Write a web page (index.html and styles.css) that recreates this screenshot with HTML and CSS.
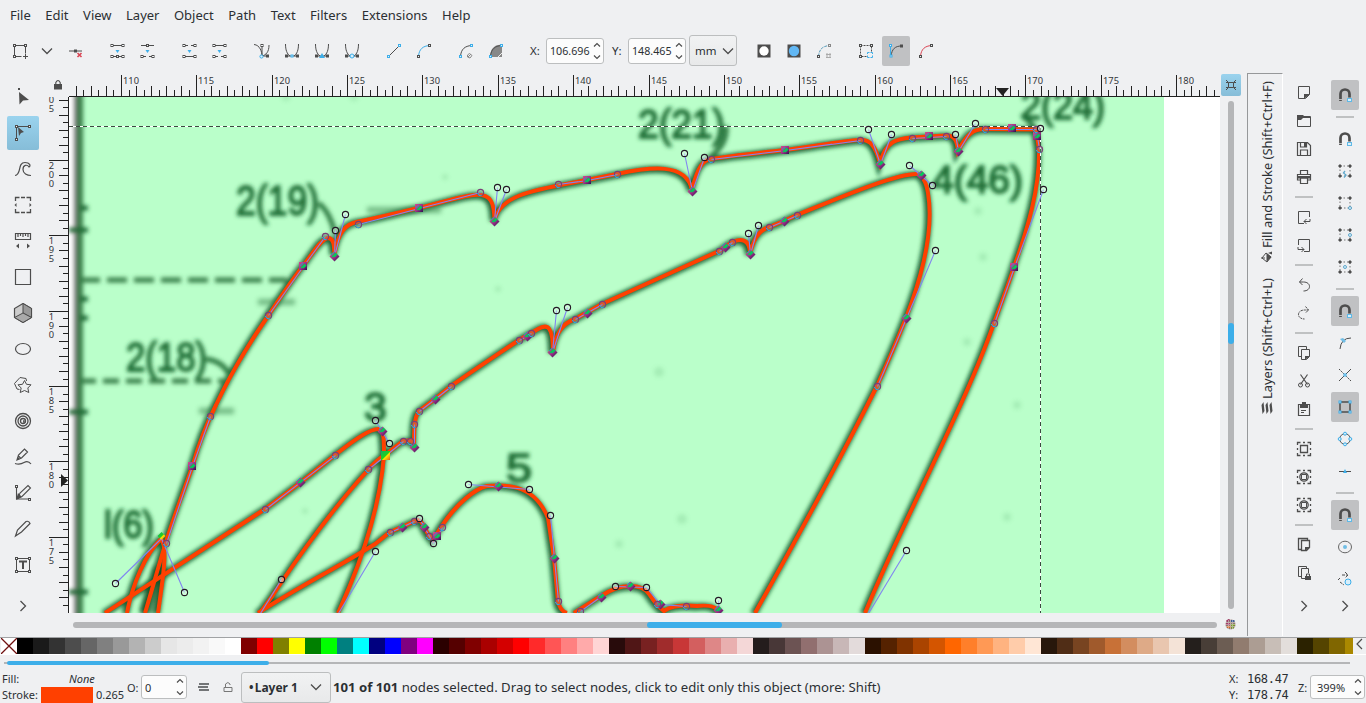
FILE: index.html
```html
<!DOCTYPE html>
<html lang="en">
<head>
<meta charset="utf-8">
<title>Vector editor</title>
<link rel="stylesheet" href="styles.css">
</head>
<body>
<div class="app">
  <nav class="menubar"><span>File</span><span>Edit</span><span>View</span><span>Layer</span><span>Object</span><span>Path</span><span>Text</span><span>Filters</span><span>Extensions</span><span>Help</span></nav>

  <header class="toolbar">
    <i class="cell" data-icon="addnode"></i><i class="cell slim" data-icon="down"></i><i class="cell" data-icon="delnode"></i>
    <i class="cell gap" data-icon="join"></i><i class="cell" data-icon="break"></i>
    <i class="cell gap" data-icon="joinseg"></i><i class="cell" data-icon="delseg"></i>
    <i class="cell gap" data-icon="cusp"></i><i class="cell" data-icon="smooth"></i><i class="cell" data-icon="symm"></i><i class="cell" data-icon="auto"></i>
    <i class="cell gap" data-icon="line"></i><i class="cell" data-icon="curve"></i>
    <i class="cell gap" data-icon="objpath"></i><i class="cell" data-icon="strokepath"></i>
    <label class="lab lab-x">X:</label><span class="spin"><b>106.696</b><i data-icon="spin"></i></span>
    <label class="lab lab-y">Y:</label><span class="spin"><b>148.465</b><i data-icon="spin"></i></span>
    <span class="unit">mm<i data-icon="down"></i></span>
    <i class="cell unitgap" data-icon="clip"></i><i class="cell" data-icon="mask"></i><i class="cell" data-icon="lpe"></i>
    <i class="cell gap" data-icon="transf"></i><i class="cell on" data-icon="handles"></i><i class="cell" data-icon="outline"></i>
  </header>

  <main class="work">
    <aside class="toolbox">
      <i data-icon="arrow"></i><i class="on" data-icon="node"></i><i data-icon="tweak"></i><i data-icon="zoombox"></i><i data-icon="measure"></i><i data-icon="rect"></i><i data-icon="cube"></i><i data-icon="ellipse"></i><i data-icon="star"></i><i data-icon="spiral"></i><i data-icon="pencil"></i><i data-icon="pen"></i><i data-icon="brush"></i><i data-icon="text"></i><i class="more" data-icon="right"></i>
    </aside>

    <section class="view">
      <div class="corner" data-icon="lock"></div>
      <svg class="hruler" id="hruler" viewBox="69 73 1151 24"></svg>
      <div class="zoomfit" data-icon="fit"></div>
      <svg class="vruler" id="vruler" viewBox="46 97 23 516"></svg>
      <svg class="canvas" viewBox="69 97 1151 516">
        <defs>
          <filter id="soft" x="-5%" y="-5%" width="110%" height="110%"><feGaussianBlur stdDeviation="2"/></filter>
          <filter id="softer" x="-20%" y="-50%" width="140%" height="200%"><feGaussianBlur stdDeviation="2.8"/></filter>
          <linearGradient id="nodefill" x1="0" y1="0" x2="1" y2="1"><stop offset="0" stop-color="#d05090"/><stop offset=".5" stop-color="#a03088"/><stop offset="1" stop-color="#2c1250"/></linearGradient>
          <linearGradient id="nodehot" x1="0" y1="0" x2="1" y2="1"><stop offset="0" stop-color="#10b060"/><stop offset=".5" stop-color="#20d020"/><stop offset=".6" stop-color="#ffe000"/><stop offset="1" stop-color="#e06020"/></linearGradient>
          <g id="curves">
            <path d="M145 613C152 590 159 564 166 542C174 516 184 491 192.500 466C200 440 208 421 216 405C231 373 250 342 268 316C280 298 291 281 303 266C313 253 321 239 328 238C334 238 334 246 334.500 254C338 233 345 224 358 221.500C379 218 399 212 419 208C440 203 461 196 474 195C492 193 494 204 494.500 220C501 194 535 190 587 180C597 178 607 176 617 174C650 167 686 162 692 190C698 165 704 160 711 159C735 155 760 153 785 150C810 147 835 142 858 140C871 138 876 148 880 163C886 140 898 139 912 137.500C918 137 923 137 929 136.500L946 135.500C955 135 957 141 958 151C967 134 973 129 985 129L1036 129.500L1039 149C1040 187 1028 228 1014 267C1008 286 1001 304 994 323C966 404 902 523 865 613"/>
            <path d="M755 613C796 540 842 456 877 386C887 364 897 341 906 318C926 266 933 223 928 193C926 180 921 175 918 174C896 173 834 200 797 215L784 221L769 227C757 231 753 242 750 254C750 244 746 240 740 240C732 240 728 246 719 251L602 304L575 319C560 324 555 337 553 352C553 327 548 323 538 329L519 340C495 356 474 370 451 386L435 399L419 411C414 417 414 431 414 447C414 440 411 440 403 441L385 455C378 459 374 463 368 470C336 505 299 555 273 595L260 613"/>
            <path d="M105 613L265 509L300 483L335 455C355 439 371 428 379 429C384 431 384 440 384 455C380 509 361 563 338 613"/>
            <path d="M127 613C132 586 145 554 161 539C168 547 163 578 158 613"/>
            <path d="M258 613C297 588 340 566 375 544L390 532L402 527L415 521C422 518 423 526 428 534L433 540L441 527C457 503 475 489 487 486C510 484 535 486 548 518L554 558L558 601Q560 611 567 613"/>
            <path d="M574 613L601 596Q616 586 630 586Q644 586 649 594Q657 606 664 611Q674 604 697 606Q717 604 719 613"/>
          </g>
        </defs>
        <rect x="69" y="97" width="1151" height="516" fill="#fff"/>
        <rect x="78" y="97" width="1086" height="516" fill="#baffca"/>
        <g filter="url(#soft)">
          <path d="M76 90V620" stroke="#777" stroke-width="4"/>
          <path d="M80 90V620" stroke="#377f49" stroke-width="6"/>
          <g fill="none" stroke="#0f5226" stroke-width="7" opacity=".9"><use href="#curves" x="-1.500" y="1"/></g>
          <path d="M80 208h8M69 230h19M80 299h8M80 318h8M69 412h19M69 592h19" stroke="#1e6934" stroke-width="5"/>
          <path d="M80 280H287" stroke="#387e49" stroke-width="5" stroke-dasharray="20 7"/>
          <path d="M80 381H226" stroke="#387e49" stroke-width="5" stroke-dasharray="16 7"/>
          <path d="M319 203Q331 214 335 234M206 359Q226 362 230 378M726 126Q728 144 709 158M1022 114L1035 128" fill="none" stroke="#2c783f" stroke-width="5"/>
          <g class="scan-text">
            <text x="236" y="215" font-size="42" textLength="83" lengthAdjust="spacingAndGlyphs">2(19)</text>
            <text x="126" y="371" font-size="41" textLength="81" lengthAdjust="spacingAndGlyphs">2(18)</text>
            <text x="638" y="138" font-size="41" textLength="87" lengthAdjust="spacingAndGlyphs">2(21)</text>
            <text x="1021" y="119" font-size="38" textLength="84" lengthAdjust="spacingAndGlyphs">2(24)</text>
            <text x="932" y="193" font-size="39" textLength="91" lengthAdjust="spacingAndGlyphs">4(46)</text>
            <text x="104" y="538" font-size="39" textLength="50" lengthAdjust="spacingAndGlyphs">l(6)</text>
            <text x="364" y="421" font-size="41">3</text>
            <text x="506" y="482" font-size="41" textLength="26" lengthAdjust="spacingAndGlyphs">5</text>
          </g>
        </g>
        <g filter="url(#softer)" opacity=".55">
          <path d="M258 302h37M199 411h35M367 210h74" stroke="#37814b" stroke-width="6"/>
          <path d="M160 568L146 613" stroke="#07441b" stroke-width="14"/>
        </g>
        <g fill="#78c58a" opacity=".3" filter="url(#soft)"><circle cx="354" cy="97" r="4"/><circle cx="286" cy="97" r="4"/><circle cx="445" cy="177" r="3"/><circle cx="498" cy="289" r="3"/><circle cx="659" cy="372" r="5"/><circle cx="682" cy="519" r="5"/><circle cx="619" cy="544" r="4"/><circle cx="978" cy="211" r="4"/><circle cx="983" cy="257" r="4"/><circle cx="967" cy="342" r="4"/><circle cx="1017" cy="405" r="4"/><circle cx="1007" cy="517" r="4"/><circle cx="305" cy="511" r="3"/></g>
        <use href="#curves" fill="none" stroke="#ff4000" stroke-width="4"/>
        <g fill="none" shape-rendering="crispEdges"><path d="M69 126.500H1040.500V613" stroke="#fff"/><path d="M69 126.500H1040.500V613" stroke="#3c4a40" stroke-dasharray="4 3"/></g>
        <g id="nodes"></g>
      </svg>
      <div class="vscroll"><span></span></div>
      <div class="hscroll"><span></span></div>
      <div class="cms" data-icon="cms"></div>
    </section>

    <aside class="dock"><span class="tab tab-layers"><i data-icon="layers"></i>Layers (Shift+Ctrl+L)</span><span class="tab"><i data-icon="bucket"></i>Fill and Stroke (Shift+Ctrl+F)</span></aside>

    <aside class="commands">
      <i data-icon="new"></i><i data-icon="open"></i><i data-icon="save"></i><i data-icon="print"></i><hr>
      <i data-icon="import"></i><i data-icon="export"></i><hr><i data-icon="undo"></i><i data-icon="redo"></i><hr>
      <i data-icon="copy"></i><i data-icon="cut"></i><i data-icon="paste"></i><hr>
      <i data-icon="zsel"></i><i data-icon="zdraw"></i><i data-icon="zdraw"></i><hr>
      <i data-icon="dup"></i><i data-icon="clone"></i><i class="more" data-icon="right"></i>
    </aside>
    <aside class="snap">
      <i class="on" data-icon="magnet"></i><hr><i data-icon="magnet"></i><i data-icon="sn1"></i><i data-icon="sn2"></i><i data-icon="sn3"></i><i data-icon="sn4"></i><hr>
      <i class="on" data-icon="magnet"></i><i data-icon="snpath"></i><i data-icon="sncross"></i><i class="on" data-icon="sncusp"></i><i data-icon="snsmooth"></i><i data-icon="snmid"></i><hr>
      <i class="on" data-icon="magnet"></i><i data-icon="sncenter"></i><i data-icon="snrot"></i><i class="more" data-icon="right"></i>
    </aside>
  </main>

  <div class="palette"><div class="swatches" id="swatches"></div><i data-icon="left"></i></div>
  <div class="palscroll"><span></span></div>

  <footer class="status">
    <div class="style"><span>Fill:</span><em>None</em><span>Stroke:</span><b class="strokecolor"></b><span class="sw">0.265</span></div>
    <span class="opl">O:</span><span class="spin opacity"><b>0</b><i data-icon="spin"></i></span>
    <i class="vis" data-icon="lines"></i><i class="lk" data-icon="unlock"></i>
    <span class="layer"><b>•&hairsp;Layer 1</b><i data-icon="down"></i></span>
    <p class="message"><b>101 of 101</b> nodes selected. Drag to select nodes, click to edit only this object (more: Shift)</p>
    <div class="coords"><span>X:</span><code>168.47</code><span>Y:</span><code>178.74</code></div>
    <span class="zl">Z:</span><span class="spin zoom"><b>399%</b><i data-icon="spin"></i></span>
  </footer>
</div>
<script src="script.js"></script>
</body>
</html>
```
FILE: styles.css
```css
* { box-sizing: border-box; }
body { margin: 0; background: #eff0f2; color: #2b2f33; font: 13px "Noto Sans", sans-serif; overflow: hidden; }
i { font-style: normal; }
svg { display: block; }
i[data-icon] { display: flex; align-items: center; justify-content: center; }
.app { width: 1366px; height: 703px; display: flex; flex-direction: column; }

.menubar { height: 30px; padding-left: 10px; display: flex; gap: 14.5px; align-items: center; }

.toolbar { height: 43px; display: flex; align-items: center; padding: 0 0 2px 5px; font-size: 11.5px; }
.cell { width: 30px; height: 30px; flex: none; }
.cell.slim { width: 24px; margin-right: 2px; }
.cell.gap { margin-left: 12px; }
.cell.on { width: 28px; margin: 0 1px; background: #c0c1c3; border-radius: 2px; }
.cell.unitgap { margin-left: 12px; }
.lab-x { width: 16px; margin-left: 19px; }
.lab-y { width: 16px; margin-left: 8px; }
.spin { display: flex; align-items: center; justify-content: space-between; width: 58px; height: 26px; border: 1px solid #bcbebf; border-radius: 3px; background: #fcfcfc; padding-left: 3px; font-size: 10.7px; }
.spin b { font-weight: 400; width: 41px; white-space: nowrap; }
.spin i { width: 11px; flex: none; }
.unit { display: flex; align-items: center; width: 48px; height: 31px; margin-left: 3px; padding-left: 5px; gap: 3px; border: 1px solid #bcbebf; border-radius: 3px; background: linear-gradient(#f1f2f3, #e8e9ea); }

.work { height: 564px; display: flex; }
.toolbox { width: 46px; padding-top: 6px; display: flex; flex-direction: column; align-items: center; }
.toolbox i { width: 32px; height: 34px; margin: 1px 0; flex: none; }
.toolbox .on, .zoomfit { background: linear-gradient(#9ad3ee, #86bdd8); border-radius: 2px; }
.toolbox .more { margin-top: 6px; }

.view { width: 1201px; display: grid; grid-template-columns: 23px 1151px 27px; grid-template-rows: 24px 516px 24px; }
.corner { display: flex; align-items: center; justify-content: center; }
.zoomfit { width: 20px; height: 22px; margin: 1px 0 0 1px; display: flex; align-items: center; justify-content: center; }
.hruler, .vruler, .canvas { width: 100%; height: 100%; }
.hruler text, .vruler text { font: 9.3px "Noto Sans", sans-serif; fill: #33373b; }
.canvas { overflow: hidden; }
.scan-text { font-family: "Liberation Sans", sans-serif; fill: #1e6c34; stroke: #1e6c34; stroke-width: 1.8; }
.vscroll { width: 6px; height: 508px; margin: 4px 0 0 8px; padding-top: 222px; border-radius: 3px; background: #b5b6b8; }
.vscroll span { display: block; height: 21px; border-radius: 3px; background: #3daee9; }
.hscroll { grid-column: 1 / 3; width: 1144px; height: 6px; margin: 9px 0 0 27px; padding-left: 574px; border-radius: 3px; background: #b5b6b8; }
.hscroll span { display: block; width: 135px; height: 6px; border-radius: 3px; background: #3daee9; }
.cms { padding: 6px 0 0 5px; }

.dock { width: 36px; height: 563px; writing-mode: vertical-rl; transform: rotate(180deg); border-left: 1px solid #fff; border-right: 1px solid #96989a; border-bottom: 1px solid #96989a; display: flex; justify-content: flex-end; align-items: center; padding: 0 4px 7px 0; gap: 15px; font-size: 12.9px; }
.tab { display: flex; align-items: center; gap: 3px; white-space: nowrap; }

.commands { width: 42px; }
.snap { width: 40px; }
.commands, .snap { padding-top: 6px; display: flex; flex-direction: column; align-items: center; }
.commands i { width: 28px; height: 28px; }
.snap i { width: 28px; height: 30px; margin: 1px 0; }
.snap .on { background: #c0c1c3; border-radius: 2px; }
.commands hr, .snap hr { width: 18px; height: 2px; margin: 5px 0; border: 0; background: #bfc1c2; flex: none; }
.commands .more { margin-top: 5px; }
.snap .more { margin-top: -4px; }

.palette { height: 18px; border-top: 1px solid #a0a2a4; border-bottom: 1px solid #fff; display: flex; }
.swatches { width: 1353px; padding-left: 1px; display: flex; overflow: hidden; }
.swatches span { width: 16px; height: 16px; flex: none; }
.palette i { width: 13px; height: 12px; }
.palscroll { width: 1346px; height: 2px; flex: none; margin: 7px 0 1px 4px; padding-left: 3px; background: #b5b6b8; }
.palscroll span { display: block; width: 262px; height: 4px; border-radius: 2px; background: #3daee9; transform: translateY(-1px); }

.status { height: 38px; padding: 6px 0 0 2px; display: flex; align-items: center; }
.style { width: 123px; height: 32px; display: grid; grid-template: 16px 16px / 39px 52px 32px; font-size: 11px; line-height: 16px; }
.style em { grid-column: 2 / 4; padding-left: 28px; }
.strokecolor { background: #ff4000; }
.style .sw { padding-left: 3px; }
.opl { width: 16px; padding-left: 2px; font-size: 11px; }
.opacity { width: 46px; height: 24px; font-size: 11px; }
.opacity b, .zoom b { width: 30px; }
.vis { width: 14px; margin-left: 10px; }
.lk { width: 14px; margin-left: 10px; }
.layer { width: 90px; height: 31px; margin-left: 6px; padding: 0 6px 0 7px; display: flex; align-items: center; justify-content: space-between; border: 1px solid #bcbebf; border-radius: 3px; background: linear-gradient(#f1f2f3, #e8e9ea); font-size: 12px; }
.message { margin: 0 0 0 2px; width: 896px; font-size: 13.16px; white-space: nowrap; }
.coords { width: 69px; display: grid; grid-template: 16px 16px / 18px 50px; font-size: 11px; line-height: 16px; }
.coords code { font: 12px/16px "DejaVu Sans Mono", monospace; letter-spacing: -.3px; }
.zl { width: 12px; font-size: 11px; }
.zoom { width: 55px; height: 24px; font-size: 11px; padding-left: 6px; }
```
FILE: script.js
```js
const D = '#4d4d4d', B = '#3daee9';
const p = (d, c = D, w = 1, f = 'none') => `<path d="${d}" fill="${f}" stroke="${c}" stroke-width="${w}"/>`;
const dot = (x, y, c = D) => `<rect x="${x - 1}" y="${y - 1}" width="2" height="2" fill="#eff0f2" stroke="${c}"/>`;
const ring = (x, y, r = 2, c = B) => `<circle cx="${x}" cy="${y}" r="${r}" fill="#d8effb" stroke="${c}"/>`;
const fill = (d, c = D) => `<path d="${d}" fill="${c}"/>`;
const seg = (y, gap) => (gap ? p(`M3 ${y}h4M10 ${y}h4`) : p(`M3 ${y}h11`)) + dot(3, y) + dot(14, y);
const cup = p('M2.500 2C2.500 8 4 12 7 14M15.500 2C15.500 8 14 12 11 14M3 14h12') + dot(3.500, 14) + dot(14.500, 14);
const page = p('M3.500 2.500h11v8l-4 4h-7z');
const corners = p('M2.500 5v-2.500h3M12.500 2.500h3v2.500M15.500 13v2.500h-3M5.500 15.500h-3v-2.500M8 2.500h2M8 15.500h2M2.500 8v2M15.500 8v2', D, 1.3);
const snapBox = p('M4 4h10v10h-10z', '#777').replace('/>', ' stroke-dasharray="1.500 2"/>') + [[4, 4], [14, 4], [4, 14], [14, 14]].map(([x, y]) => fill(`M${x - 2} ${y}l2-2 2 2-2 2z`)).join('');

const icons = {
  down: [16, 16, p('M3 5.500l5 5 5-5', D, 1.3)],
  right: [16, 16, p('M5.500 3l5 5-5 5', D, 1.3)],
  left: [13, 12, p('M9 1l-5 5 5 5', D, 1.2)],
  spin: [11, 24, p('M2 7.500l3-3 3 3M2 16.500l3 3 3-3', D, 1.2)],
  addnode: [18, 18, p('M3.500 3.500h11v8M3.500 3.500v11h7M12 14.500h5M14.500 12v5') + dot(3.500, 3.500) + dot(14.500, 3.500) + dot(3.500, 14.500)],
  delnode: [18, 18, p('M2 9h13') + dot(8.500, 9) + p('M10.500 11l4 4M14.500 11l-4 4', '#da4453', 1.6)],
  join: [18, 18, seg(3.5) + seg(14.5) + dot(8.500, 14.5) + fill('M6.500 8h4l-2 3z', B)],
  break: [18, 18, p('M2 3.500h13') + dot(8.500, 3.5) + seg(14.5, 1) + fill('M6.500 8h4l-2 3z', B)],
  joinseg: [18, 18, seg(3.5, 1) + seg(14.5) + fill('M6.500 8h4l-2 3z', B)],
  delseg: [18, 18, seg(3.5) + seg(14.5, 1) + fill('M6.500 8h4l-2 3z', B)],
  cusp: [18, 18, p('M1 2.500C7 3 9 10 9 14C13 13 16 10 16 3M9 14V4M9 14h5') + dot(9, 3.5) + dot(14.5, 14) + ring(8.5, 14.5, 1.6)],
  smooth: [18, 18, cup + dot(9, 14, B)],
  symm: [18, 18, cup + fill('M6 16l3-5 3 5z', B)],
  auto: [18, 18, cup + ring(9, 14)],
  line: [18, 18, p('M3.500 14.500l11-11') + dot(3.5, 14.5, B) + dot(14.5, 3.5, B)],
  curve: [18, 18, p('M3.500 14.500C4 7 8 4 14.500 3.500', B) + dot(3.5, 14.5) + dot(14.5, 3.5)],
  objpath: [18, 18, p('M3.500 14.500C4 7 8 4 14.500 3.500') + dot(3.5, 14.5, B) + dot(14.5, 3.5, B) + p('M10.500 13l2-1.500 2.500 2-2 2.500-2.500-1zM11 15l3-3', '#888')],
  strokepath: [18, 18, fill('M3 15C3 7 8 2 15 3v12z', '#888') + p('M3.500 14.500C4 7 8 4 14.500 3.500') + dot(3.5, 14.5, B) + dot(14.5, 3.5, B) + p('M11 15l4-4', '#eee')],
  clip: [16, 16, fill('M1.500 1.500h13v13h-13z') + '<circle cx="8" cy="8" r="4.700" fill="#fff"/>'],
  mask: [16, 16, fill('M1.500 1.500h13v13h-13z') + '<circle cx="8" cy="8" r="5.200" fill="#62b8f5"/>'],
  lpe: [18, 18, p('M3.500 14.500C4 7 8 4 14.500 3.500', '#5a9dbb').replace('/>', ' stroke-dasharray="3 1"/>') + dot(3.5, 14.5) + dot(14.5, 3.5, '#888') + p('M11 12.500h5M11 15.500h5M12 11v5M15 11v5', '#aaa')],
  transf: [18, 18, p('M3.500 3.500h11v6M3.500 3.500v11h6').replace('/>', ' stroke-dasharray="2 1"/>') + dot(3.5, 3.5) + dot(14.5, 3.5) + dot(3.5, 14.5) + p('M10.500 12v-1.500h2M15.500 12v-1.500h-2M10.500 13.500v2h2M15.500 13.500v2h-2', B)],
  handles: [18, 18, p('M4 14C5 7 8 4 14.500 4') + p('M3.500 4v10', B) + dot(3.5, 3.5, B) + dot(4, 14, B) + dot(14.5, 4)],
  outline: [18, 18, p('M3.500 14.500C4 7 8 4 14.500 3.500', '#da4453') + dot(3.5, 14.5) + dot(14.5, 3.5)],
  arrow: [20, 20, fill('M6 5l10 8-6 .500-3.500 4zM5 1h2v2H5z')],
  node: [20, 20, p('M3.500 16V3.500H17') + dot(3.5, 3.5) + dot(3.5, 16.5) + dot(16.5, 3.5) + fill('M5 4l6 5-3 1-2 3z')],
  tweak: [20, 20, p('M2 16.500C9 16 4 3.500 12 3.500c5 0 6 3.500 4 4.500c-2-3-6-2-6 2.500c0 4 4 6 8 6', D, 1.2)],
  zoombox: [20, 20, p('M2.500 6v-3.500h4M13.500 2.500h4v3.500M17.500 14v3.500h-4M6.500 17.500h-4v-3.500M8 2.500h4M8 17.500h4', D, 1.3) + fill('M1.500 10l2-2v4zM18.500 10l-2-2v4z')],
  measure: [20, 20, p('M2.500 2.500h15v6h-15zM5 3v3M7.500 3v2M10 3v3M12.500 3v2M15 3v3', D, 1.2) + fill('M3 15l3-2.500v5zM17 15l-3-2.500v5z')],
  rect: [20, 20, p('M2.500 2.500h15v15h-15z', D, 1.2)],
  cube: [20, 20, p('M10 .500l8.500 5v9l-8.500 5-8.500-5v-9z', D, 1.2, '#ccc') + p('M10 .500l8.500 5v9L10 10z', D, 1, '#999') + p('M1.500 14.500L10 10l8.500 4.500-8.500 5z', D, 1, '#aaa')],
  ellipse: [20, 20, '<ellipse cx="10" cy="10" rx="7.500" ry="5.500" fill="none" stroke="#4d4d4d" stroke-width="1.200"/>'],
  star: [20, 20, p('M6.500 14.500L4 14L1.500 8.500L7 2.500L13 3.500L13.500 6') + p('M11.500 5.500l2 3.800 4.500.500-3.200 3.200 1 4.500-4.300-2-4.300 2 1-4.500-3.200-3.200 4.500-.500z')],
  spiral: [20, 20, '<circle cx="10" cy="10" r="7.500"/><circle cx="10" cy="10" r="5"/><circle cx="10" cy="10" r="2.500"/><path d="M10 10h1v2"/>'.replace(/\/>/g, ' fill="none" stroke="#4d4d4d" stroke-width="1.300"/>')],
  pencil: [20, 20, p('M4 13l1.500-5 6-6 3 3-6 6zM5 8.500l3 3M2 16.500q5 1.500 9-1t7 1.500', D, 1.2) + fill('M4 13l1-3 2 2z')],
  pen: [20, 20, p('M3.500 3v13h14M5 15l2-5 8-7.500 2.500 2.500-8.500 8.500z', D, 1.1) + dot(3.5, 3.5) + dot(16.5, 16.5) + fill('M3 17l2-7 4 4z')],
  brush: [20, 20, p('M2.500 17l2-6 8.500-8.500q3-1 4 2L8.500 13z', D, 1.2)],
  text: [20, 20, p('M3.500 3.500h13v13h-13z') + dot(3.5, 3.5) + dot(16.5, 3.5) + dot(3.5, 16.5) + dot(16.5, 16.5) + p('M6 6.500h8M10 6.500v7.500', D, 2)],
  lock: [10, 12, fill('M1 5h8v5.500H1z') + p('M2.800 6V3.500Q5-.500 7.200 3.500V6', D, 1.1)],
  unlock: [12, 14, p('M2 7.500h8v4H2zM3.500 7V4Q6 1 8 4v1', '#777')],
  fit: [14, 14, p('M4.500 4.500h5v5h-5zM2 2l2.500 2.500M12 2L9.500 4.500M2 12l2.500-2.500M12 12L9.500 9.500M2 4.500h2M10 4.500h2M2 9.500h2M10 9.500h2')],
  cms: [11, 11, '<g><circle cx="5.500" cy="5.500" r="5" fill="#8f766f"/><path d="M1.500 2.500l3-2M1 5h4" stroke="#a13c67" stroke-width="2"/><path d="M6 2h3.500" stroke="#3e5c94" stroke-width="2"/><path d="M2 8h3.500" stroke="#d16628" stroke-width="2"/><path d="M6 8.500h3M6 6h4" stroke="#78942e" stroke-width="2"/><path d="M1 3.500h9M0 5.500h11M1 7.500h9M3.500 1v9M5.500 0v11M7.500 1v9" stroke="#fff" opacity=".4"/></g>'],
  layers: [12, 12, '<g transform="rotate(90 6 6)">' + fill('M0 1.500L9 .500l3 2-9 1zM0 5.500l9-1 3 2-9 1zM0 9.500l9-1 3 2-9 1z') + '</g>'],
  bucket: [13, 12, '<g transform="rotate(90 6 6)">' + p('M5 1L1 6l5 4 4-5zM5 4V0') + fill('M1 5.500h9l-4 5zM10 7l1.500 4h-3z') + '</g>'],
  new: [18, 18, page + fill('M9 15v-5h6z')],
  open: [18, 18, p('M2.500 4.500h13v10h-13z') + fill('M2 3h6l2 2h6v1H8L6 8H2z')],
  save: [18, 18, p('M2.500 2.500h10l3 3v10h-13zM5.500 3v4h6v-4M5.500 15v-5h7v5', D, 1.2) + fill('M9 3h2v4H9z')],
  print: [18, 18, p('M5.500 6V2.500h7V6M5.500 12h-3V6.500h13V12h-3M5.500 10h7v5.500h-7z', D, 1.2) + fill('M3 8h12v2.500H3z')],
  import: [18, 18, p('M9 15.500H3.500v-12h11V9M15 11v2.500H9M11.500 11L9 13.500l2.500 2.500')],
  export: [18, 18, p('M9 15.500h5.500v-12h-11V9M3 11v2.500h6M6.500 11L9 13.500l-2.500 2.500')],
  undo: [18, 18, p('M7.500 2.500L4.500 6l3 3M4.500 6h4c8 0 8 9 0 9')],
  redo: [18, 18, p('M10.500 2.500l3 3.500-3 3M13.500 6h-4c-8 0-8 9 0 9').replace('/>', ' stroke-dasharray="2 .7"/>')],
  copy: [18, 18, p('M6 12.500H3.500v-10h8V5M6.500 5.500h8v7l-3 3h-5z') + fill('M10 16v-4h5z')],
  cut: [18, 18, p('M5.500 2.500l7 10M12.500 2.500l-7 10', D, 1.2) + p('M3.500 13a2 2 0 1 0 4 0a2 2 0 1 0-4 0M10.500 13a2 2 0 1 0 4 0a2 2 0 1 0-4 0')],
  paste: [18, 18, p('M3.500 4.500h11v11h-11z', D, 1.2) + fill('M5 5h8v3H5zM7 2h4v4H7zM6 10h5v1H6zM6 12h3v1H6z')],
  zsel: [18, 18, corners + p('M5.500 5.500h7v7h-7z', D, 1.3)],
  zdraw: [18, 18, corners + '<circle cx="9" cy="9" r="4.200" fill="none" stroke="#4d4d4d" stroke-width="1.300"/>' + p('M6.500 6.500h5v5h-5z')],
  dup: [18, 18, p('M6 13.500H3.500v-11h9v2M6.500 4.500h8v7l-3 3h-5z', D, 1.3) + fill('M10 15v-4h5z')],
  clone: [18, 18, p('M6 12.500H3.500v-10h8v2M13.500 9V4.500h-7v10H10') + fill('M10 12h6v4h-6z') + p('M11.500 12v-2h3v2')],
  magnet: [18, 18, p('M4.500 15V8a4.500 4.500 0 0 1 9 0V11.500', D, 2.7) + p('M3 13.500h3', '#bbb') + '<rect x="11.500" y="12.500" width="4" height="3" fill="#d8effb" stroke="#60b9e6"/>'],
  sn1: [18, 18, snapBox + p('M9 9l-1.500 2L10 13l-2 2.500', '#60a8cc', 1.3)],
  sn2: [18, 18, snapBox + ring(14, 14, 1.5, '#60a8cc')],
  sn3: [18, 18, snapBox + ring(14, 9, 1.5, '#60a8cc')],
  sn4: [18, 18, snapBox + ring(9, 9, 1.5, '#60a8cc')],
  snpath: [18, 18, p('M4 15Q5 4 15 4') + fill('M4 5l3-1 3 3-2 2z', '#70bde5')],
  sncross: [18, 18, p('M3 15L15 3') + p('M3 3l12 12').replace('/>', ' stroke-dasharray="2 1"/>') + dot(9, 9, B)],
  sncusp: [18, 18, p('M4 4h10v10H4z', D, 1.5) + dot(4, 4, B) + dot(14, 4, B) + dot(4, 14, B) + dot(14, 14, B)],
  snsmooth: [18, 18, '<circle cx="9" cy="9" r="5.300" fill="none" stroke="#555"/>' + ring(9, 3.7, 1.5) + ring(9, 14.3, 1.5) + ring(3.7, 9, 1.5) + ring(14.3, 9, 1.5)],
  snmid: [18, 18, p('M3 9.500h12') + fill('M7 11L9 7l2 4z', B)],
  sncenter: [18, 18, '<ellipse cx="9" cy="9" rx="6.500" ry="5.800" fill="none" stroke="#666"/><circle cx="9" cy="9" r="2" fill="#70bde5"/>'],
  snrot: [18, 18, p('M6 5h6M9 2l3 3-3 3M4 8l-2 2M4 12l4 3').replace('/>', ' stroke-dasharray="3 1"/>') + ring(12, 12, 3)],
  lines: [14, 14, fill('M2 3h10v2H2zM1 6h10v2H1zM2 9h10v2H2z', '#737577')]
};
document.querySelectorAll('[data-icon]').forEach(el => {
  const [w, h, body] = icons[el.dataset.icon];
  el.innerHTML = `<svg width="${w}" height="${h}" viewBox="0 0 ${w} ${h}">${body}</svg>`;
});

/* Rulers: one unit is 15.07px, with half-unit ticks between. */
const STEP = 7.537;
let h = '<rect x="69" y="96" width="1151" height="1" fill="#222"/>';
for (let n = -6; n < 146; n++) {
  const x = Math.floor(121.5 + n * STEP), major = n % 10 === 0;
  h += `<rect x="${x}" y="${major ? 75 : n % 2 ? 90 : 86}" width="1" height="${major ? 22 : n % 2 ? 7 : 11}" fill="#222"/>`;
  if (major) h += `<text x="${x + 2}" y="84">${110 + n / 2}</text>`;
}
h += '<path d="M996 88h13l-6.500 8z" fill="#222"/>';
document.getElementById('hruler').innerHTML = h;

let v = '<rect x="68" y="97" width="1" height="516" fill="#222"/>';
for (let n = -10; n < 60; n++) {
  const y = Math.floor(160.5 + n * STEP), major = n % 10 === 0;
  const x = major ? 49 : n % 2 ? 63 : 59;
  v += `<rect x="${x}" y="${y}" width="${69 - x}" height="1" fill="#222"/>`;
  if (major) [...String(200 - n / 2)].forEach((c, i) => { v += `<text x="48.700" y="${y + 9 + i * 9}">${c}</text>`; });
}
v += '<path d="M61 474v13l7-6.500z" fill="#222"/>';
document.getElementById('vruler').innerHTML = v;

/* Selected path nodes, handle lines and handles. */
const lines = [[115,583,161,538],[161,538,184,592],[166,543,192,466],[192,466,210,416],[268,315,303,266],[303,266,325,236],[335,230,334,256],[334,256,345,214],[358,224,419,208],[419,208,480,192],[497,187,494,221],[494,221,506,189],[558,184,587,180],[587,180,617,174],[684,153,692,191],[692,191,704,157],[711,159,785,150],[785,150,860,140],[868,129,880,164],[880,164,891,134],[912,138,946,136],[955,134,958,151],[958,151,975,123],[985,129,1036,129],[1037,136,1039,149],[1043,189,1014,267],[1014,267,994,323],[909,165,932,185],[935,250,906,318],[906,318,877,386],[769,227,797,215],[748,233,750,254],[750,254,758,225],[719,251,732,242],[556,310,552,352],[552,352,567,307],[519,340,531,333],[575,319,602,304],[419,411,451,386],[414,424,414,447],[368,469,403,441],[375,420,389,443],[265,509,335,455],[281,579,260,613],[375,551,338,613],[390,532,414,521],[419,518,433,543],[433,543,442,527],[468,484,529,489],[550,515,558,601],[906,550,868,613],[580,611,601,596],[615,586,646,587],[646,587,660,604],[660,604,686,606],[718,600,719,613]];
const handles = [[345,214],[335,230],[325,236],[358,224],[268,315],[480,192],[497,187],[506,189],[684,153],[704,157],[711,159],[617,174],[558,184],[860,140],[868,129],[891,134],[912,138],[946,136],[955,134],[975,123],[985,129],[1036,129],[1040,128],[1039,149],[1043,189],[994,323],[909,165],[932,185],[935,250],[877,386],[797,215],[769,227],[748,233],[758,225],[719,251],[732,242],[210,416],[166,543],[115,583],[184,592],[265,509],[335,455],[375,420],[389,443],[368,469],[403,441],[410,441],[414,424],[419,411],[451,386],[281,579],[375,551],[390,532],[414,521],[419,518],[429,536],[433,543],[442,527],[468,484],[529,489],[550,515],[558,601],[556,310],[567,307],[519,340],[531,333],[575,319],[602,304],[906,550],[580,611],[615,586],[646,587],[657,604],[686,606],[718,600]];
const quiet = new Set(['268,315','325,236','358,224','480,192','711,159','617,174','558,184','860,140','912,138','946,136','985,129','1036,129','1039,149','994,323','877,386','797,215','769,227','719,251','732,242','210,416','166,543','265,509','335,455','368,469','403,441','410,441','414,424','419,411','451,386','390,532','414,521','429,536','442,527','558,601','519,340','531,333','575,319','602,304','580,611','657,604','686,606']);
const squares = [[303,266],[419,208],[587,180],[785,150],[929,136],[1012,128],[1037,136],[1014,267],[192,466],[437,536]];
const diamonds = [[334,256],[494,221],[527,336],[692,191],[880,164],[958,151],[921,175],[784,221],[725,247],[750,254],[906,318],[552,352],[435,399],[414,447],[382,431],[300,482],[402,527],[424,527],[498,486],[554,558],[587,313],[601,597],[630,586],[660,604],[718,610]];
let s = '';
lines.forEach(([a, b, c, d]) => { s += `<path d="M${a + .5} ${b + .5}L${c + .5} ${d + .5}" stroke="#8185f0" stroke-width="1.100"/>`; });
const core = (x, y) => `<path d="M${x - 2} ${y + 2}l4-4M${x} ${y + 2}l3-3" stroke="#08c75a" stroke-width="1.600"/><path d="M${x - 3} ${y}l3-3" stroke="#24a8b8"/>`;
squares.forEach(([x, y]) => { s += `<rect x="${x - 4}" y="${y - 4}" width="8" height="8" fill="url(#nodefill)"/>` + core(x, y); });
diamonds.forEach(([x, y]) => { s += `<path d="M${x - 4.5} ${y + .5}l5-5 5 5-5 5z" fill="url(#nodefill)"/>` + core(x, y - 1); });
s += '<rect x="381" y="451" width="9" height="9" fill="url(#nodehot)"/><path d="M157.500 536l4-4 4 4-4 4z" fill="url(#nodehot)"/>';
handles.forEach(([x, y]) => {
  const q = quiet.has(x + ',' + y);
  s += `<circle cx="${x + .5}" cy="${y + .5}" r="3.100" fill="${q ? '#8f8f90' : '#e9f8ed'}" fill-opacity="${q ? .3 : .45}" stroke="${q ? '#7b3f77' : '#241826'}" stroke-width="1.100"/>`;
  if (q) s += `<path d="M${x - 2.5} ${y + 1}a3.100 3.100 0 0 0 4 2.500" fill="none" stroke="#20bfe8"/>`;
});
document.getElementById('nodes').innerHTML = s;

/* Colour palette. */
const colors = '000000 1a1a1a 333333 4d4d4d 666666 808080 999999 b3b3b3 cccccc e6e6e6 ececec f2f2f2 f9f9f9 ffffff 800000 ff0000 808000 ffff00 008000 00ff00 008080 00ffff 000080 0000ff 800080 ff00ff 2b0000 550000 800000 aa0000 d40000 ff0000 ff2a2a ff5555 ff8080 ffaaaa ffd5d5 280b0b 501616 782121 a02c2c c83737 d35f5f de8787 e9afaf f4d7d7 241c1c 483737 6c5353 916f6f ac9393 c8b7b7 e3dbdb 2b1100 552200 803300 aa4400 d45500 ff6600 ff7f2a ff9955 ffb380 ffccaa ffe6d5 28170b 502d16 784421 a05a2c c87137 d38d5f deaa87 e9c6af f4e3d7 241f1c 483e37 6c5d53 917c6f ac9d93 c8beb7 e3dedb 2b2200 554400 806600 aa8800'.split(' ');
document.getElementById('swatches').innerHTML = '<span><svg width="16" height="16"><rect width="16" height="16" fill="#fff"/><path d="M0 0l16 16M16 0L0 16" stroke="#701010" stroke-width="1.300"/></svg></span>' + colors.map(c => `<span style="background:#${c}"></span>`).join('');
```
